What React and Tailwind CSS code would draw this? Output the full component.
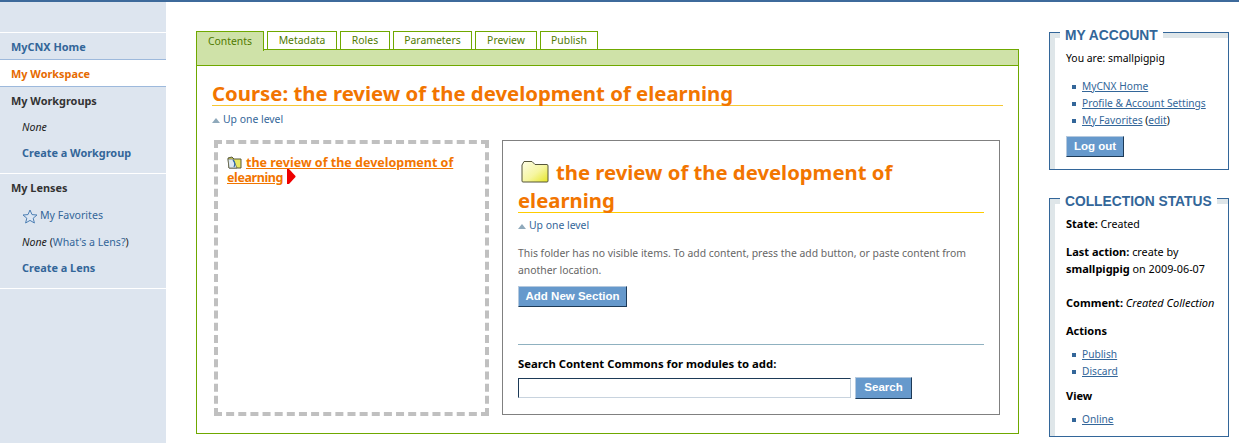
import React from "react";

const tabs = ["Contents", "Metadata", "Roles", "Parameters", "Preview", "Publish"];
const tabWidths = ["w-[68px]", "w-[70px]", "w-[50px]", "w-[79px]", "w-[62px]", "w-[58px]"];

function UpLevel({ className = "" }) {
  return (
    <div className={`flex items-center gap-[3px] text-[#369] ${className}`}>
      <svg width="8" height="5" viewBox="0 0 8 5"><path d="M4 0 L8 5 L0 5 Z" fill="#8fa9bb" /></svg>
      <span>Up one level</span>
    </div>
  );
}

function FolderIcon() {
  return (
    <svg width="28" height="23" viewBox="0 0 28 23" className="inline-block align-[-3px] mr-[7px] ml-[3px]">
      <defs>
        <linearGradient id="folderFill" x1="0" y1="0" x2="1" y2="1">
          <stop offset="0" stopColor="#fdfde8" />
          <stop offset="0.55" stopColor="#f6f6a0" />
          <stop offset="1" stopColor="#e6e625" />
        </linearGradient>
      </defs>
      <path d="M1 5 L3 1.5 H11 L14 4.5 H26 Q27 4.5 27 6 V21 Q27 22 26 22 H2 Q1 22 1 21 Z" fill="url(#folderFill)" stroke="#55553a" strokeWidth="1" />
    </svg>
  );
}

function SmallFolder() {
  return (
    <svg width="15" height="13" viewBox="0 0 15 13" className="inline-block align-[-2px] mr-[4px]">
      <path d="M1 2 L5 1 L7 3 H14 V12 H2 Z" fill="#e8e860" stroke="#56563a" strokeWidth="1" />
      <path d="M1 3 H6 L10 12 H2 Z" fill="#dfe9f2" stroke="#56563a" strokeWidth="0.7" />
      <path d="M6 4 Q9 7 7 11" fill="none" stroke="#2f6aa8" strokeWidth="1.2" />
    </svg>
  );
}

function StatusBullet({ children }) {
  return (
    <li className="flex items-center h-[17px] text-[10.2px] whitespace-pre">
      <span className="w-[4px] h-[4px] bg-[#369] ml-[6px] mr-[6px]" />
      <span>{children}</span>
    </li>
  );
}

function SideBox({ title, className = "", children }) {
  return (
    <fieldset className={`border border-[#369] shadow-[inset_5px_5px_0_#dfe6e9] min-w-0 pl-[16px] ${className}`}>
      <legend className="ml-[-6px] px-[5px] pt-[8px] bg-white text-[13.8px] leading-[14px] font-bold text-[#369] font-['Liberation_Sans',sans-serif] whitespace-nowrap">{title}</legend>
      {children}
    </fieldset>
  );
}

function BlueButton({ children, className = "" }) {
  return (
    <button className={`bg-[#6699cc] text-white font-bold border border-[#b5c9de] border-r-[#1d3a57] border-b-[#1d3a57] font-['Liberation_Sans',sans-serif] text-[11.5px] ${className}`}>
      {children}
    </button>
  );
}

export default function App() {
  return (
    <div className="w-[1239px] h-[443px] overflow-hidden bg-white border-t-2 border-[#3d6a9b] flex font-['Noto_Sans',sans-serif] text-[10.4px] text-black">
      {/* left nav */}
      <nav className="w-[166px] shrink-0 bg-[#dde5ef] text-[#369] pt-[30px]">
        <div className="border-t border-white h-[27px] flex items-center pl-[11px] pt-[3px] font-bold text-[10.9px]">MyCNX Home</div>
        <div className="border-y border-[#9db9dc] bg-white h-[28px] flex items-center pl-[11px] pt-[2px] font-bold text-[10.9px] text-[#e66a00]">My Workspace</div>
        <div className="h-[87px] border-b border-white pt-[6px]">
          <div className="pl-[11px] font-bold text-[10.9px] text-[#333] h-[16px] leading-[16px]">My Workgroups</div>
          <div className="pl-[22px] italic text-[#222] mt-[10px] h-[16px] leading-[16px] text-[10.6px]">None</div>
          <div className="pl-[22px] font-bold text-[10.9px] mt-[10px] h-[16px] leading-[16px]">Create a Workgroup</div>
        </div>
        <div className="h-[115px] border-b border-white pt-[6px]">
          <div className="pl-[11px] font-bold text-[10.9px] text-[#333] h-[16px] leading-[16px]">My Lenses</div>
          <div className="pl-[22px] mt-[11px] h-[18px] flex items-center gap-[2px] text-[10.6px]">
            <svg width="16" height="15" viewBox="0 0 16 15"><path d="M8 1 L10 5.6 L15 6 L11.2 9.2 L12.4 14 L8 11.4 L3.6 14 L4.8 9.2 L1 6 L6 5.6 Z" fill="#dbe6f3" stroke="#4d7fb3" strokeWidth="1" /></svg>
            <span>My Favorites</span>
          </div>
          <div className="pl-[22px] mt-[9px] h-[16px] leading-[16px] text-[10.6px]"><i className="text-[#222]">None</i> <span className="text-[#222]">(</span>What's a Lens?<span className="text-[#222]">)</span></div>
          <div className="pl-[22px] font-bold text-[10.9px] mt-[10px] h-[16px] leading-[16px]">Create a Lens</div>
        </div>
      </nav>

      {/* main column */}
      <main className="w-[853px] shrink-0 pl-[30px] pt-[29px]">
        <div className="flex items-end gap-[3px] h-[19px]">
          {tabs.map((t, i) => (
            <div key={t} className={`${tabWidths[i]} h-[19px] relative z-10 border border-[#6fa800] flex items-center justify-center pt-[1px] text-[#4f7a00] ${i === 0 ? "border-b-0 bg-[#cfe2a8] h-[20px] mb-[-1px]" : "bg-white"}`}>{t}</div>
          ))}
        </div>
        <div className="w-[823px] h-[385px] border border-[#6fa800] mt-[-1px]">
          <div className="h-[16px] bg-[#cfe2a8] border-b border-[#6fa800]" />
          <div className="px-[15px] pt-[16px]">
            <h1 className="text-[20.35px] leading-[23px] font-bold text-[#f27500] border-b border-[#f5c832]">Course: the review of the development of elearning</h1>
            <UpLevel className="mt-[7px] h-[14px]" />
            <div className="flex mt-[13px] ml-[2px] gap-[13px]">
              <div className="w-[275px] h-[276px] border-[4px] border-dashed border-[#c0c0c0] pl-[9px] pr-[8px] pt-[11px] text-[12.5px] leading-[15px] font-bold text-[#f27500]">
                <SmallFolder />
                <span className="underline">the review of the development of <span className="tracking-[-0.4px]">elearning</span></span>
                <svg width="10" height="15" viewBox="0 0 10 15" className="inline-block align-[1px] -my-[3px] ml-[3px]"><path d="M1 0 L3 0 L9.5 7 L9.5 8 L3 15 L1 15 Z" fill="#ee0000" /></svg>
              </div>
              <div className="w-[498px] h-[275px] border border-[#808080] px-[15px] pt-[17px]">
                <h2 className="text-[20.3px] leading-[28px] h-[55px] font-bold text-[#f27500] border-b border-[#ffcc00]"><FolderIcon />the review of the development of elearning</h2>
                <UpLevel className="mt-[6px] h-[14px]" />
                <p className="mt-[12px] leading-[17px] text-[#666]">This folder has no visible items. To add content, press the add button, or paste content from another location.</p>
                <BlueButton className="mt-[7px] w-[109px] h-[21px] block">Add New Section</BlueButton>
                <div className="border-t border-[#8fb1c0] mt-[37px] pt-[11px]">
                  <div className="font-bold text-[11.3px] h-[16px] leading-[16px]">Search Content Commons for modules to add:</div>
                  <div className="flex items-center mt-[5px] gap-[4px]">
                    <input className="w-[333px] h-[20px] border border-[#c8d3de] border-t-[#1d3a57] border-l-[#1d3a57] bg-white" />
                    <BlueButton className="w-[57px] h-[22px]">Search</BlueButton>
                  </div>
                </div>
              </div>
            </div>
          </div>
        </div>
      </main>

      {/* right column */}
      <aside className="pl-[30px] w-[220px] pt-[19px]">
        <SideBox title="MY ACCOUNT" className="w-[180px] h-[149px]">
          <div className="h-[16px] leading-[16px] mt-[7px]">You are: smallpigpig</div>
          <ul className="mt-[12px] text-[#369]">
            <StatusBullet><span className="underline">MyCNX Home</span></StatusBullet>
            <StatusBullet><span className="underline">Profile &amp; Account Settings</span></StatusBullet>
            <StatusBullet><span className="underline">My Favorites</span> <span className="text-black">(</span><span className="underline">edit</span><span className="text-black">)</span></StatusBullet>
          </ul>
          <BlueButton className="mt-[7px] w-[58px] h-[21px] block">Log out</BlueButton>
        </SideBox>
        <SideBox title="COLLECTION STATUS" className="w-[180px] h-[250px] mt-[17px]">
          <div className="h-[16px] leading-[16px] mt-[7px] text-[10.6px]"><b className="text-[11px]">State:</b> Created</div>
          <div className="leading-[17px] mt-[11px] text-[10.8px]"><b className="text-[11px]">Last action:</b> create by <b className="text-[11px]">smallpigpig</b> on 2009-06-07</div>
          <div className="h-[16px] leading-[16px] mt-[18px] text-[11px] whitespace-nowrap"><b>Comment:</b> <i>Created Collection</i></div>
          <div className="h-[16px] leading-[16px] mt-[12px] font-bold text-[11px]">Actions</div>
          <ul className="mt-[7px] text-[#369]">
            <StatusBullet><span className="underline">Publish</span></StatusBullet>
            <StatusBullet><span className="underline">Discard</span></StatusBullet>
          </ul>
          <div className="h-[16px] leading-[16px] mt-[8px] font-bold text-[11px]">View</div>
          <ul className="mt-[7px] text-[#369]">
            <StatusBullet><span className="underline">Online</span></StatusBullet>
          </ul>
        </SideBox>
      </aside>
    </div>
  );
}
